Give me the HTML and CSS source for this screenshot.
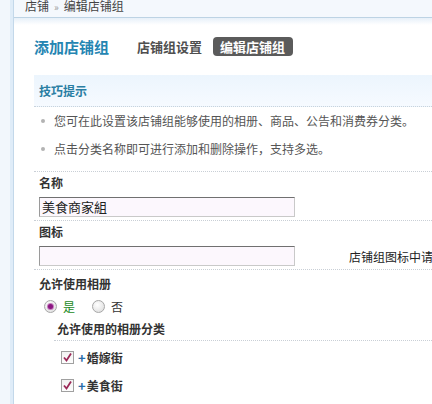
FILE: index.html
```html
<!DOCTYPE html>
<html lang="zh-CN">
<head>
<meta charset="utf-8">
<title>编辑店铺组</title>
<link rel="stylesheet" href="styles.css">
</head>
<body>
<div class="page">
  <div class="side"></div>
  <div class="main">
    <div class="crumb">店铺<span class="sep">»</span>编辑店铺组</div>
    <div class="shade"></div>
    <div class="content">
      <div class="tabs">
        <span class="title">添加店铺组</span>
        <span class="tab">店铺组设置</span>
        <span class="tab on">编辑店铺组</span>
      </div>

      <div class="tips">
        <div class="tips-head">技巧提示</div>
        <ul class="tips-list">
          <li>您可在此设置该店铺组能够使用的相册、商品、公告和消费券分类。</li>
          <li>点击分类名称即可进行添加和删除操作，支持多选。</li>
        </ul>
      </div>

      <div class="form">
        <div class="row">
          <div class="label">名称</div>
          <div class="field"><span class="input">美食商家組</span></div>
        </div>
        <div class="row">
          <div class="label">图标</div>
          <div class="field"><span class="input"></span><span class="hint">店铺组图标中请</span></div>
        </div>
        <div class="row last">
          <div class="label">允许使用相册</div>
          <div class="radios">
            <span class="radio on"></span><span class="yes">是</span>
            <span class="radio"></span><span class="no">否</span>
          </div>
          <div class="sub">
            <div class="sub-label">允许使用的相册分类</div>
            <div class="check-row first">
              <span class="check"><svg width="11" height="11" viewBox="0 0 11 11"><path d="M2 5.5 L4.5 8.5 L9 1.5" fill="none" stroke="#9b2857" stroke-width="1.8"/></svg></span>
              <span class="plus">+</span><span class="cat">婚嫁街</span>
            </div>
            <div class="check-row">
              <span class="check"><svg width="11" height="11" viewBox="0 0 11 11"><path d="M2 5.5 L4.5 8.5 L9 1.5" fill="none" stroke="#9b2857" stroke-width="1.8"/></svg></span>
              <span class="plus">+</span><span class="cat">美食街</span>
            </div>
          </div>
        </div>
      </div>
    </div>
  </div>
</div>
</body>
</html>
```

FILE: styles.css
```css
* { box-sizing: border-box; }
body {
  margin: 0;
  font-family: "Noto Sans CJK SC", sans-serif;
  font-size: 12px;
  color: #333;
  background: #fff;
  overflow: hidden;
}
.page { display: flex; height: 404px; }
.side {
  width: 14px;
  flex: none;
  background: #f2f7fc;
  border-right: 1px solid #c3d8ea;
  box-shadow: inset -3px 0 0 #dfecf8;
}
.main { flex: 1; min-width: 0; overflow: hidden; }
.crumb {
  height: 18px;
  background: #f4f8fd;
  border-bottom: 1px solid #bdd3e4;
  padding-left: 11px;
  line-height: 12px;
  color: #444;
  white-space: nowrap;
}
.crumb .sep { color: #999; margin: 0 5px; font-size: 10px; }
.shade { height: 7px; background: linear-gradient(#e7f0f9, #fff); }
.content { padding: 12px 0 0 20px; }
.tabs { display: flex; align-items: center; height: 19px; white-space: nowrap; }
.title { font-size: 15px; font-weight: bold; color: #2585b2; margin-right: 28px; }
.tab { font-size: 13px; font-weight: bold; color: #4f4f4f; margin-right: 11px; }
.tab.on {
  background: #5b5b5b;
  color: #fff;
  border-radius: 4px;
  height: 19px;
  line-height: 19px;
  padding: 0 8px 0 7px;
}
.tips { margin-top: 19px; border-bottom: 1px dotted #c9cfd6; }
.tips-head {
  height: 32px;
  line-height: 31px;
  padding-left: 5px;
  background: linear-gradient(#ecf5fd, #f6faff);
  border-bottom: 1px dotted #c9d3dc;
  font-weight: bold;
  color: #2a7ea3;
}
.tips-list { margin: 0; padding: 0 0 8px 0; list-style: none; }
.tips-list li {
  line-height: 28px;
  padding-left: 20px;
  position: relative;
  color: #555;
  white-space: nowrap;
}
.tips-list li::before {
  content: "";
  position: absolute;
  left: 7px;
  top: 12px;
  width: 4px;
  height: 4px;
  border-radius: 50%;
  background: #b3b3b3;
}
.row { padding: 0 0 3px 5px; border-bottom: 1px dotted #c9cfd6; }
.row.last { border-bottom: none; padding-top: 3px; }
.label { line-height: 22px; font-weight: bold; color: #333; }
.field { display: flex; align-items: center; margin-top: 3px; }
.input {
  display: block;
  width: 256px;
  height: 20px;
  flex: none;
  background: #fcf7fd;
  border: 1px solid #c9c9c9;
  border-top-color: #707070;
  border-left-color: #9a9a9a;
  line-height: 18px;
  padding-left: 2px;
  color: #222;
  font-size: 13px;
}
.hint { margin-left: 54px; color: #222; white-space: nowrap; }
.radios { display: flex; align-items: center; height: 23px; padding-left: 5px; }
.radio {
  width: 13px;
  height: 13px;
  border-radius: 50%;
  border: 1px solid #a7a7a7;
  background: radial-gradient(circle at 40% 35%, #fff, #d9d9d9);
  position: relative;
  margin-right: 6px;
}
.radio.on::after {
  content: "";
  position: absolute;
  left: 3px;
  top: 3px;
  width: 5px;
  height: 5px;
  border-radius: 50%;
  background: #8b1681;
  box-shadow: 0 0 0 1px #c37fbd;
}
.yes { color: #1b8a1b; margin-right: 17px; }
.no { color: #333; }
.sub { margin-left: 15px; }
.sub-label {
  line-height: 22px;
  font-weight: bold;
  color: #333;
  padding-left: 3px;
  border-bottom: 1px dotted #c9cfd6;
}
.check-row { display: flex; align-items: center; height: 28px; padding-left: 7px; }
.check-row.first { margin-top: 2px; }
.check {
  width: 13px;
  height: 13px;
  border: 1px solid #a0a0a0;
  background: linear-gradient(#f2f2f2, #fdfdfd);
  display: flex;
  align-items: center;
  justify-content: center;
  margin-right: 4px;
}
.plus { color: #2a6ca8; font-weight: bold; font-size: 13px; margin-right: 1px; }
.cat { font-weight: bold; color: #333; }
```
